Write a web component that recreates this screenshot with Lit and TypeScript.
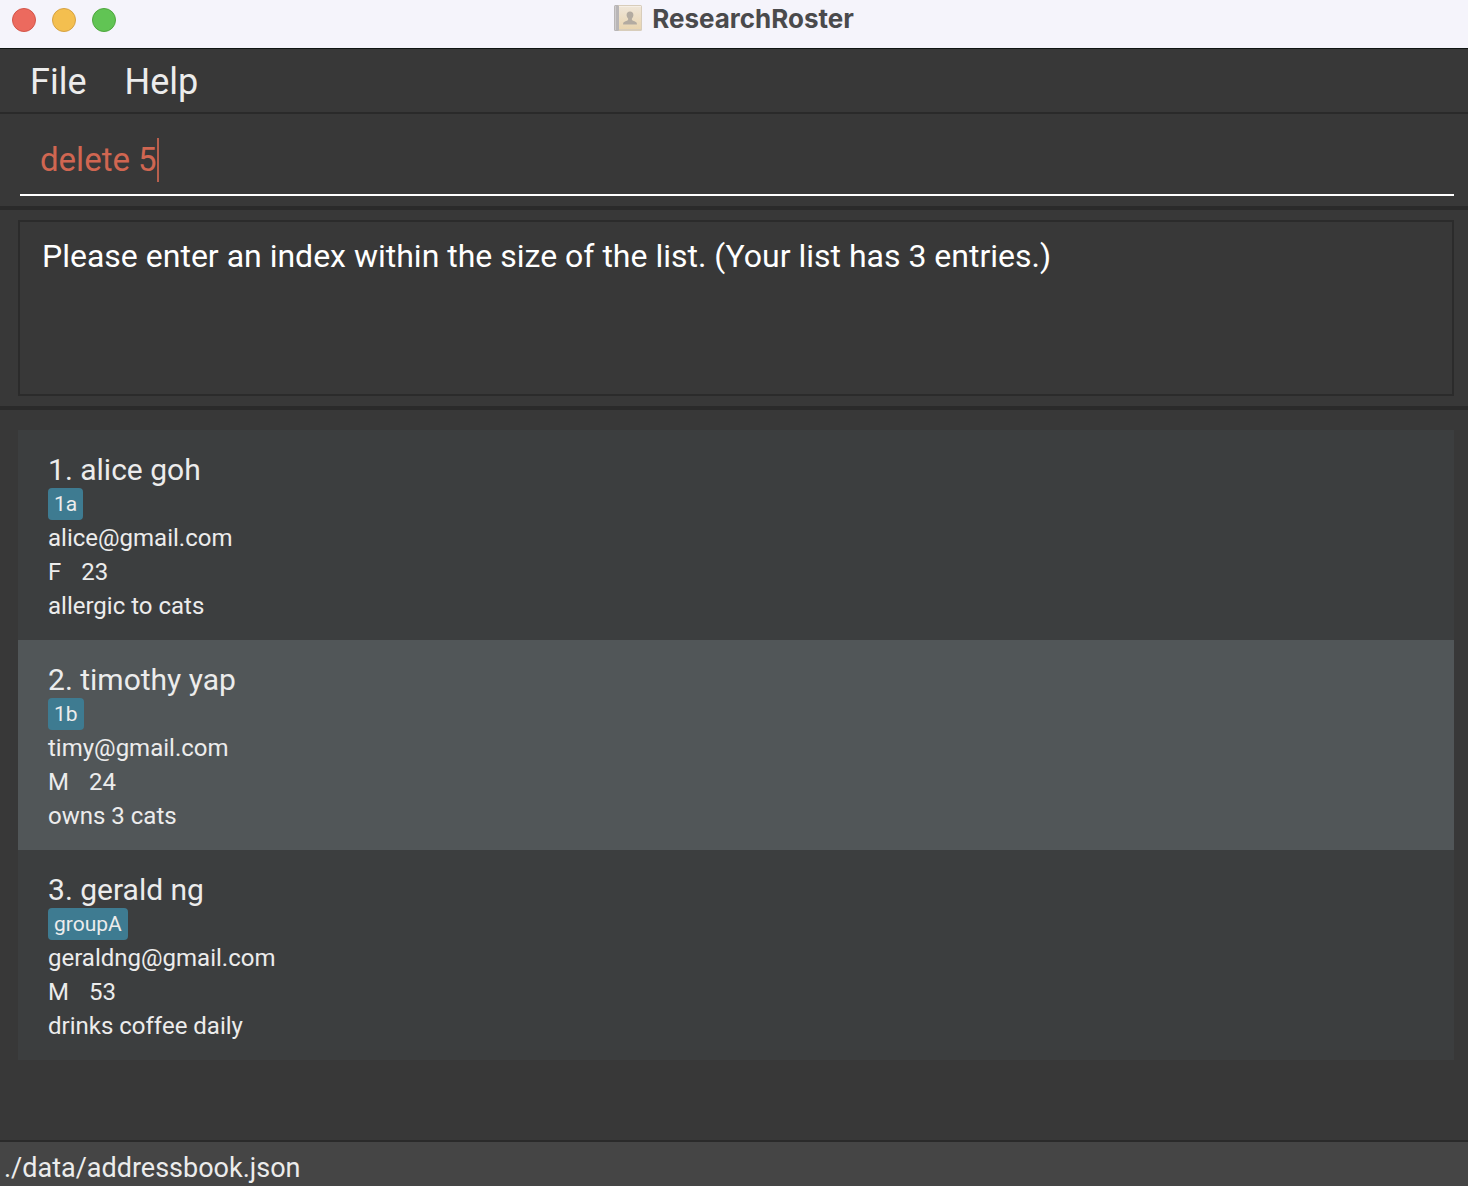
import { LitElement, html, css, svg } from "lit";
import { customElement, property, state } from "lit/decorators.js";

interface Person {
  name: string;
  tags: string[];
  email: string;
  gender: string;
  age: number;
  detail: string;
}

const PERSONS: Person[] = [
  { name: "alice goh", tags: ["1a"], email: "alice@gmail.com", gender: "F", age: 23, detail: "allergic to cats" },
  { name: "timothy yap", tags: ["1b"], email: "timy@gmail.com", gender: "M", age: 24, detail: "owns 3 cats" },
  { name: "gerald ng", tags: ["groupA"], email: "geraldng@gmail.com", gender: "M", age: 53, detail: "drinks coffee daily" },
];

const bookIcon = svg`
  <svg width="28" height="28" viewBox="0 0 28 28" aria-hidden="true">
    <defs>
      <linearGradient id="cover" x1="0" y1="0" x2="0" y2="1">
        <stop offset="0" stop-color="#efe6d9" />
        <stop offset="1" stop-color="#e9d5b0" />
      </linearGradient>
    </defs>
    <rect x="0.5" y="0" width="27.5" height="26" rx="1.5" fill="#d8cdbb" />
    <rect x="0" y="0" width="5" height="26" rx="1.5" fill="#b9b6b7" />
    <rect x="1" y="1" width="1" height="24" fill="#cfcccd" />
    <rect x="5" y="1" width="22" height="23" fill="url(#cover)" />
    <rect x="5" y="1" width="22" height="1" fill="#f6efe6" />
    <path d="M16 6.5c2.2 0 3.4 1.5 3.4 3.5 0 1.5-.7 2.800-1.500 3.500v1.500c.3.900 5 1.200 5 3.700v.8H9.100v-.8c0-2.500 4.700-2.800 5-3.700v-1.500c-.8-.7-1.500-2-1.500-3.500 0-2 1.200-3.500 3.400-3.500z" fill="#b3aba1" />
  </svg>`;

@customElement("title-bar")
class TitleBar extends LitElement {
  @property() heading = "";

  static styles = css`
    :host {
      display: grid;
      grid-template-columns: 1fr auto 1fr;
      align-items: start;
      height: 48px;
      box-sizing: border-box;
      padding: 0 12px;
      background: #f5f4fb;
      font-family: Inter, "Liberation Sans", sans-serif;
    }
    .controls {
      display: flex;
      gap: 16px;
      padding-top: 8px;
    }
    .control {
      width: 24px;
      height: 24px;
      padding: 0;
      border: 1px solid;
      border-radius: 50%;
    }
    .close { background: #ec6a5e; border-color: #d35549; }
    .minimise { background: #f4bf4f; border-color: #d6a243; }
    .zoom { background: #61c454; border-color: #4fa73e; }
    .heading {
      display: flex;
      align-items: center;
      gap: 10px;
      margin: 0;
      padding-top: 2px;
      font-size: 26px;
      line-height: 34px;
      font-weight: 700;
      color: #4a4a4c;
    }
  `;

  render() {
    return html`
      <div class="controls">
        <button class="control close" aria-label="Close"></button>
        <button class="control minimise" aria-label="Minimise"></button>
        <button class="control zoom" aria-label="Zoom"></button>
      </div>
      <h1 class="heading">${bookIcon}<span>${this.heading}</span></h1>
    `;
  }
}

@customElement("person-card")
class PersonCard extends LitElement {
  @property({ type: Number }) index = 1;
  @property({ attribute: false }) person!: Person;

  static styles = css`
    :host {
      display: block;
      padding: 20px 30px 18px;
      color: #ececec;
      font-size: 24px;
      line-height: 32px;
    }
    .name {
      margin: 0;
      padding-top: 2px;
      font-size: 30px;
      line-height: 36px;
      font-weight: inherit;
    }
    .tags {
      display: flex;
      gap: 14px;
    }
    .tag {
      padding: 0 6px;
      border-radius: 4px;
      background: #3e7b91;
      font-size: 21px;
    }
    .line {
      margin: 0;
      padding-top: 2px;
    }
    .pair {
      display: flex;
      gap: 20px;
    }
  `;

  render() {
    const p = this.person;
    return html`
      <h2 class="name">${this.index}. ${p.name}</h2>
      <div class="tags">${p.tags.map((t) => html`<span class="tag">${t}</span>`)}</div>
      <p class="line">${p.email}</p>
      <p class="line pair"><span>${p.gender}</span><span>${p.age}</span></p>
      <p class="line">${p.detail}</p>
    `;
  }
}

@customElement("app-root")
class AppRoot extends LitElement {
  @state() private command = "delete 5";

  static styles = css`
    :host {
      display: flex;
      flex-direction: column;
      min-height: 100vh;
      background: #383838;
      color: #ececec;
      font-family: Roboto, "Liberation Sans", sans-serif;
      font-weight: 400;
    }
    .menu {
      display: flex;
      gap: 38px;
      padding: 7px 30px 4px;
      border-top: 1px solid #101513;
      border-bottom: 2px solid #2a2a2a;
    }
    .menu-item {
      padding: 0;
      border: 0;
      background: none;
      color: inherit;
      font: inherit;
      font-size: 36px;
      line-height: 52px;
    }
    .pane {
      padding: 10px 14px 10px 18px;
      border-bottom: 4px solid #2a2a2a;
    }
    .command {
      display: flex;
      align-items: center;
      height: 68px;
      margin-left: 2px;
      padding: 2px 0 0 20px;
      border-bottom: 2px solid #ffffff;
    }
    .command-input {
      field-sizing: content;
      min-width: 2px;
      padding: 0;
      border: 0;
      outline: 0;
      background: none;
      color: #d06651;
      caret-color: transparent;
      font: inherit;
      font-size: 33px;
      line-height: 44px;
    }
    .caret {
      width: 2px;
      height: 44px;
      background: #b75f4d;
    }
    .result {
      display: block;
      width: 100%;
      height: 176px;
      box-sizing: border-box;
      padding: 13px 22px;
      border: 2px solid #2b2b2b;
      outline: 0;
      resize: none;
      background: none;
      color: #ffffff;
      font: inherit;
      font-size: 32px;
      line-height: 42px;
    }
    .list {
      flex: 1;
      margin: 0;
      padding: 20px 14px 20px 18px;
      list-style: none;
    }
    .item { background: #3c3e3f; }
    .item:nth-child(even) { background: #515658; }
    .status {
      padding: 8px 4px 0;
      border-top: 2px solid #2a2a2a;
      background: #454545;
      font-size: 27px;
      line-height: 36px;
    }
  `;

  private onInput(e: Event) {
    this.command = (e.target as HTMLInputElement).value;
  }

  render() {
    return html`
      <title-bar heading="ResearchRoster"></title-bar>
      <nav class="menu">
        <button class="menu-item">File</button>
        <button class="menu-item">Help</button>
      </nav>
      <div class="pane">
        <label class="command">
          <input class="command-input" aria-label="Command" spellcheck="false" .value=${this.command} @input=${this.onInput} />
          <span class="caret"></span>
        </label>
      </div>
      <div class="pane">
        <textarea class="result" readonly aria-label="Result" .value=${"Please enter an index within the size of the list. (Your list has 3 entries.)"}></textarea>
      </div>
      <ul class="list">
        ${PERSONS.map((p, i) => html`<li class="item"><person-card .index=${i + 1} .person=${p}></person-card></li>`)}
      </ul>
      <footer class="status">./data/addressbook.json</footer>
    `;
  }
}
